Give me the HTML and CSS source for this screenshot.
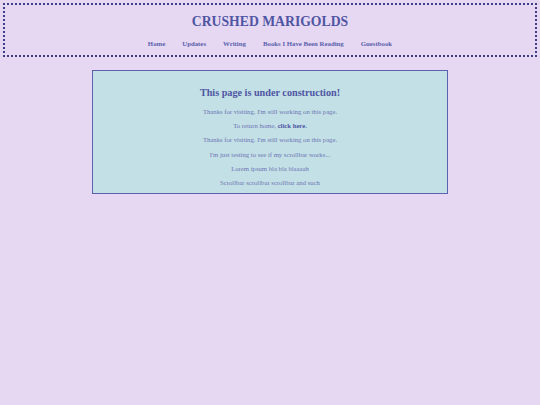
FILE: index.html
```html
<!DOCTYPE html>
<html>
<head>
<meta charset="utf-8">
<link rel="stylesheet" href="styles.css">
</head>
<body>
<header class="site-header">
  <h1 class="title">CRUSHED MARIGOLDS</h1>
  <nav class="nav">
    <a href="#">Home</a>
    <a href="#">Updates</a>
    <a href="#">Writing</a>
    <a href="#">Books I Have Been Reading</a>
    <a href="#">Guestbook</a>
  </nav>
</header>
<main class="box">
  <h2 class="heading">This page is under construction!</h2>
  <p>Thanks for visiting. I'm still working on this page.</p>
  <p>To return home, <a href="#">click here.</a></p>
  <p>Thanks for visiting. I'm still working on this page.</p>
  <p>I'm just testing to see if my scrollbar works...</p>
  <p>Lorem ipsum bla bla blaaaah</p>
  <p>Scrollbar scrollbar scrollbar and such</p>
</main>
</body>
</html>
```
FILE: styles.css
```css
html, body {
  margin: 0;
  padding: 0;
  background: #e6d8f2;
}
body {
  font-family: "Liberation Serif", "Times New Roman", serif;
  color: #5a60ad;
  padding: 3px;
}
.site-header {
  border: 2px dotted #3b3f8a;
  box-sizing: border-box;
  height: 54px;
  text-align: center;
}
.title {
  margin: 8px 0 0;
  font-size: 13.7px;
  line-height: 17px;
  color: #4f55a3;
  font-weight: bold;
}
.nav {
  margin-top: 9px;
  display: flex;
  justify-content: center;
  gap: 17px;
  font-size: 6.8px;
  line-height: 9px;
  font-weight: bold;
}
.nav a {
  color: #5a60ad;
  text-decoration: none;
}
.box {
  margin: 13px auto 0;
  width: 356px;
  box-sizing: border-box;
  background: #c2e0e5;
  border: 1px solid #5d62b0;
  text-align: center;
  padding: 15px 0 0;
}
.heading {
  margin: 0 0 6.5px;
  font-size: 10.2px;
  line-height: 14px;
  color: #4f55a3;
}
.box p {
  margin: 0 0 5.4px;
  font-size: 6.7px;
  line-height: 9px;
  color: #7076b6;
}
.box p a {
  color: #4e54a3;
  font-weight: bold;
  text-decoration: none;
}
```
